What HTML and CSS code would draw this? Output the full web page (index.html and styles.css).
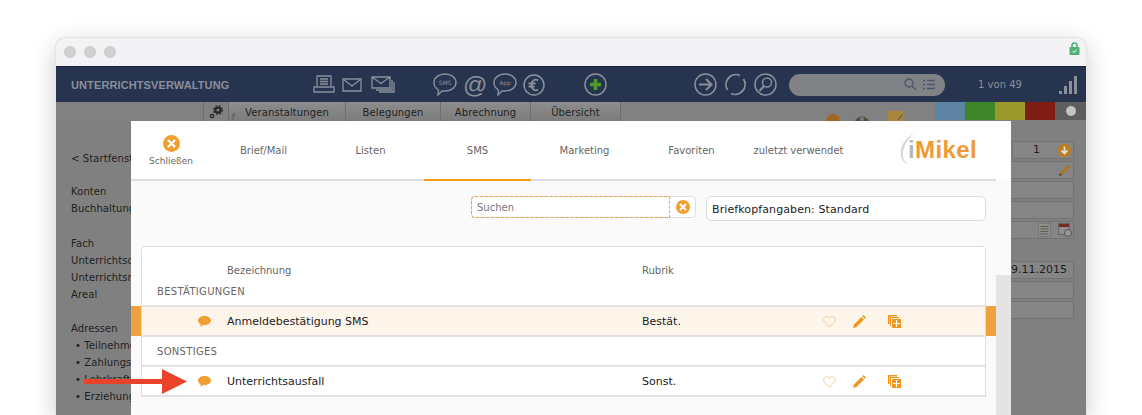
FILE: index.html
```html
<!DOCTYPE html>
<html lang="de">
<head>
    <meta charset="UTF-8">
    <title>iMikel Unterrichtsverwaltung</title>
    <link rel="stylesheet" href="styles.css">
</head>
<body>
<div class="window">
    <div class="titlebar">
        <div class="lights"><span></span><span></span><span></span></div>
        <svg class="lock" width="11" height="13" viewBox="0 0 11 13"><path d="M3 6V3.500a2.500 2.500 0 0 1 5 0V6" fill="none" stroke="#4fb274" stroke-width="1.600"/><rect x="0.500" y="5" width="10" height="8" rx="1" fill="#4fb274"/><path d="M3.500 9l1.500 1.500L7.500 7.500" fill="none" stroke="#fff" stroke-width="1"/></svg>
    </div>

    <div class="navbar">
        <div class="app-title">UNTERRICHTSVERWALTUNG</div>
        <div class="nav-group mail-group">
            <svg class="printer" width="22" height="20" viewBox="0 0 22 20" fill="none" stroke="#8a8f9a" stroke-width="1.300"><path d="M4 11V1h14v10M1 12h20v5H1zM7 4h8M7 6.500h8M7 9h8"/></svg>
            <svg width="20" height="14" viewBox="0 0 20 14" fill="none" stroke="#8a8f9a" stroke-width="1.300"><path d="M1 1h18v12H1zM1 1l9 7 9-7"/></svg>
            <svg width="24" height="17" viewBox="0 0 24 17" fill="none" stroke="#8a8f9a" stroke-width="1.300"><path d="M1 1h18v11H1zM1 1l9 6.500L19 1M21 4v10H5M23 6v10H8"/></svg>
        </div>
        <div class="nav-group send-group">
            <svg width="24" height="23" viewBox="0 0 24 23"><path d="M12 1c6 0 11 3.600 11 8.500S18 18 12 18c-1.500 0-2 0-3 0l-4 4 .5-5C3 15.500 1 13 1 9.500 1 4.600 6 1 12 1z" fill="none" stroke="#8a8f9a" stroke-width="1.400"/><text x="12" y="12" class="bubble-text">SMS</text></svg>
            <span class="at-sign">@</span>
            <svg width="24" height="23" viewBox="0 0 24 23"><path d="M12 1c6 0 11 3.600 11 8.500S18 18 12 18c-1.500 0-2 0-3 0l-4 4 .5-5C3 15.500 1 13 1 9.500 1 4.600 6 1 12 1z" fill="none" stroke="#8a8f9a" stroke-width="1.400"/><text x="12" y="12" class="bubble-text">App</text></svg>
            <svg width="22" height="22" viewBox="0 0 22 22" fill="none" stroke="#8a8f9a"><circle cx="11" cy="11" r="10" stroke-width="1.500"/><path d="M15 6.500c-3-2-6.500 0-6.500 4.500s3.500 6.500 6.500 4.500M5.500 9.500h7M5.500 12.500h6" stroke-width="1.800"/></svg>
        </div>
        <svg class="add-icon" width="23" height="23" viewBox="0 0 23 23"><circle cx="11.500" cy="11.500" r="10.500" fill="none" stroke="#8a8f9a" stroke-width="1.500"/><path d="M11.500 6v11M6 11.500h11" stroke="#4d9a2a" stroke-width="3.600"/></svg>
        <div class="nav-group browse-group">
            <svg width="23" height="23" viewBox="0 0 23 23" fill="none" stroke="#8a8f9a" stroke-width="1.500"><circle cx="11.500" cy="11.500" r="10.500"/><path d="M5 11.500h12M12 6l5.500 5.500L12 17" stroke-width="2"/></svg>
            <svg width="23" height="23" viewBox="0 0 23 23" fill="none" stroke="#8a8f9a" stroke-width="1.800"><path d="M16 2.500A10 10 0 0 0 3.500 17M7 20.500A10 10 0 0 0 19.500 6"/></svg>
            <svg width="23" height="23" viewBox="0 0 23 23" fill="none" stroke="#8a8f9a" stroke-width="1.500"><circle cx="11.500" cy="11.500" r="10.500"/><circle cx="13" cy="9.500" r="4.500"/><path d="M10 13l-4.500 5" stroke-width="2"/></svg>
        </div>
        <div class="search-pill">
            <svg width="13" height="13" viewBox="0 0 13 13" fill="none" stroke="#4b5568" stroke-width="1.300"><circle cx="5" cy="5" r="4"/><path d="M8 8l4 4"/></svg>
            <svg width="12" height="11" viewBox="0 0 12 11" fill="none" stroke="#4b5568" stroke-width="1.300"><path d="M0 1.500h2M4 1.500h8M0 5.500h2M4 5.500h8M0 9.500h2M4 9.500h8"/></svg>
        </div>
        <div class="counter">1 von 49</div>
        <div class="signal"><span></span><span></span><span></span><span></span></div>
    </div>

    <div class="toolbar">
        <div class="gear-cell">
            <svg width="14" height="14" viewBox="0 0 14 14" fill="none" stroke="#222"><circle cx="9" cy="5" r="2.600" stroke-width="2"/><circle cx="9" cy="5" r="4.300" stroke-width="1.200" stroke-dasharray="2 1.400"/><circle cx="3" cy="11" r="1.700" stroke-width="1.200"/></svg>
        </div>
        <div class="tab first-tab">
            <svg class="tab-back" width="7" height="8" viewBox="0 0 7 8"><path d="M1 8V3h3M2.500 1L.5 3l2 2" fill="none" stroke="#666" stroke-width="1.200"/></svg>
            Veranstaltungen
        </div>
        <div class="tab belegungen-tab">Belegungen</div>
        <div class="tab">Abrechnung</div>
        <div class="tab">Übersicht</div>
        <div class="toolbar-icons">
            <svg width="14" height="8" viewBox="0 0 14 8"><path d="M0 8a7 7 0 0 1 14 0z" fill="#a8661a"/><path d="M7 0v8" stroke="#6e6e5e"/></svg>
            <svg width="14" height="8" viewBox="0 0 14 8"><path d="M0 8c3-6 11-6 14 0z" fill="#55503c"/><circle cx="7" cy="6" r="2" fill="#7c7c7c"/></svg>
            <svg class="note-icon" width="16" height="10" viewBox="0 0 16 10"><rect x="0" y="0" width="15" height="10" fill="#a8873a"/><path d="M10 9l4-5" stroke="#555" stroke-width="1.200"/></svg>
        </div>
        <div class="swatches">
            <span class="swatch blue"></span>
            <span class="swatch green"></span>
            <span class="swatch yellow"></span>
            <span class="swatch red"></span>
            <span class="swatch grey"><i></i></span>
        </div>
    </div>

    <div class="backdrop">
        <div class="side-nav">
            <p class="start-link">&lt; Startfenster</p>
            <p>Konten</p>
            <p>Buchhaltung</p>
            <p class="gap">Fach</p>
            <p>Unterrichtsort</p>
            <p>Unterrichtsmittel</p>
            <p>Areal</p>
            <p class="gap">Adressen</p>
            <p class="bullet">Teilnehmer</p>
            <p class="bullet">Zahlungspflichtige</p>
            <p class="bullet">Lehrkraft</p>
            <p class="bullet">Erziehung</p>
        </div>
        <div class="side-fields">
            <div class="number-row">
                <div class="field"></div>
                <div class="field number-field">1
                    <svg width="13" height="13" viewBox="0 0 13 13"><circle cx="6.500" cy="6.500" r="6.500" fill="#c27c1c"/><path d="M6.500 2.500v7M3.500 6.500l3 3 3-3" fill="none" stroke="#ddd" stroke-width="1.800"/></svg>
                </div>
            </div>
            <div class="field icons-row">
                <svg width="14" height="14" viewBox="0 0 14 14"><path d="M1 13l1.500-4L10 1.500 12.500 4 5 11.500z" fill="#a8762c"/><path d="M1 13l1-3 2 2z" fill="#444"/></svg>
            </div>
            <div class="field"></div>
            <div class="field"></div>
            <div class="field icons-row list-icons">
                <svg width="13" height="14" viewBox="0 0 13 14"><rect x="0.500" y="0.500" width="12" height="13" fill="#8e8e8e" stroke="#777"/><path d="M2.500 3.500h8M2.500 6h8M2.500 8.500h8M2.500 11h8" stroke="#5f5a4a"/></svg>
                <svg width="14" height="14" viewBox="0 0 14 14"><rect x="0.500" y="0.500" width="11" height="11" fill="#8e8e8e" stroke="#666"/><path d="M1 2.500h10" stroke="#7a2a22" stroke-width="3"/><circle cx="10" cy="10" r="3.500" fill="#999" stroke="#555"/></svg>
            </div>
            <div class="field date-field">9.11.2015</div>
            <div class="field"></div>
            <div class="field"></div>
        </div>
    </div>

    <!-- Dialog ueber dem abgedunkelten Fenster -->
    <div class="dialog">
        <div class="dialog-main">
            <div class="dialog-head">
                <div class="close-btn">
                    <svg width="17" height="17" viewBox="0 0 17 17"><circle cx="8.500" cy="8.500" r="8.500" fill="#f0a030"/><path d="M5 5l7 7M12 5l-7 7" stroke="#fff" stroke-width="2.200"/></svg>
                    <span>Schließen</span>
                </div>
                <nav class="dialog-tabs">
                    <div class="dialog-tab">Brief/Mail</div>
                    <div class="dialog-tab">Listen</div>
                    <div class="dialog-tab active">SMS</div>
                    <div class="dialog-tab">Marketing</div>
                    <div class="dialog-tab">Favoriten</div>
                    <div class="dialog-tab">zuletzt verwendet</div>
                </nav>
                <div class="logo">
                    <svg class="logo-swoosh" width="22" height="32" viewBox="0 0 22 32"><path d="M15 1C5 5 0 15 2 24c1 4 4 7 9 7-4-1-7-4-7-9C4 14 8 7 15 1z" fill="#d9d9d9"/></svg>
                    <span class="logo-i">i</span><span class="logo-name">Mikel</span>
                </div>
            </div>

            <div class="filter-row">
                <div class="search-box">
                    <div class="search-input">Suchen</div>
                    <svg width="14" height="14" viewBox="0 0 14 14"><circle cx="7" cy="7" r="7" fill="#f0a030"/><path d="M4 4l6 6M10 4l-6 6" stroke="#fff" stroke-width="1.800"/></svg>
                </div>
                <div class="letterhead">Briefkopfangaben: Standard</div>
            </div>

            <div class="list-card">
                <div class="list-head">
                    <span class="col-name">Bezeichnung</span>
                    <span class="col-rubrik">Rubrik</span>
                </div>
                <div class="group-title first-group">BESTÄTIGUNGEN</div>
                <div class="list-row selected">
                    <svg class="bubble" width="13" height="11" viewBox="0 0 13 11"><path d="M6.500 0C10 0 13 1.800 13 4.500S10 9 6.500 9C6 9 5.500 9 5 9L2.500 11l.2-2.800C1 7.500 0 6 0 4.500 0 1.800 3 0 6.500 0z" fill="#f0a030"/></svg>
                    <span class="col-name">Anmeldebestätigung SMS</span>
                    <span class="col-rubrik">Bestät.</span>
                    <div class="row-actions">
                        <svg width="13" height="12" viewBox="0 0 13 12"><path d="M6.500 11L1.500 6C-.5 3.500 1.500.7 3.700.7c1.300 0 2.300.8 2.800 1.800C7 1.500 8 .7 9.300.7c2.200 0 4.200 2.800 2.200 5.300z" fill="none" stroke="#f5c998" stroke-width="1"/></svg>
                        <svg class="edit-icon" width="13" height="13" viewBox="0 0 13 13"><path d="M0 13l1-3.500L8.500 2 11 4.500 3.500 12zM9.300 1.200L10.500 0 13 2.500l-1.200 1.200z" fill="#f0951e"/></svg>
                        <svg width="13" height="13" viewBox="0 0 13 13"><path d="M0 0h9v1.500H1.500V9H0z" fill="#f0951e"/><path d="M2 2h9v1H3v8H2z" fill="#f0951e"/><rect x="4" y="4" width="9" height="9" fill="#f0951e"/><path d="M8.500 5v7M5 8.500h7" stroke="#fff" stroke-width="1.200"/></svg>
                    </div>
                </div>
                <div class="group-title">SONSTIGES</div>
                <div class="list-row">
                    <svg class="bubble" width="13" height="11" viewBox="0 0 13 11"><path d="M6.500 0C10 0 13 1.800 13 4.500S10 9 6.500 9C6 9 5.500 9 5 9L2.500 11l.2-2.800C1 7.500 0 6 0 4.500 0 1.800 3 0 6.500 0z" fill="#f0a030"/></svg>
                    <span class="col-name">Unterrichtsausfall</span>
                    <span class="col-rubrik">Sonst.</span>
                    <div class="row-actions">
                        <svg width="13" height="12" viewBox="0 0 13 12"><path d="M6.500 11L1.500 6C-.5 3.500 1.500.7 3.700.7c1.300 0 2.300.8 2.800 1.800C7 1.500 8 .7 9.300.7c2.200 0 4.200 2.800 2.200 5.300z" fill="none" stroke="#f5c998" stroke-width="1"/></svg>
                        <svg class="edit-icon" width="13" height="13" viewBox="0 0 13 13"><path d="M0 13l1-3.500L8.500 2 11 4.500 3.500 12zM9.300 1.200L10.500 0 13 2.500l-1.200 1.200z" fill="#f0951e"/></svg>
                        <svg width="13" height="13" viewBox="0 0 13 13"><path d="M0 0h9v1.500H1.500V9H0z" fill="#f0951e"/><path d="M2 2h9v1H3v8H2z" fill="#f0951e"/><rect x="4" y="4" width="9" height="9" fill="#f0951e"/><path d="M8.500 5v7M5 8.500h7" stroke="#fff" stroke-width="1.200"/></svg>
                    </div>
                </div>
            </div>
        </div>
        <div class="dialog-strip"></div>
    </div>
</div>

<svg class="arrow" width="103" height="25" viewBox="0 0 103 25"><path d="M0 10h78V0l25 12.500L78 25V15H0z" fill="#e9432a"/></svg>
</body>
</html>
```

FILE: styles.css
```css
html, body {
    margin: 0;
    padding: 0;
    height: 100%;
    overflow: hidden;
    background-color: #fff;
    font-family: "DejaVu Sans", Verdana, sans-serif;
}

body {
    position: relative;
    padding: 38px 56px 0;
    box-sizing: border-box;
}

p {
    margin: 0;
}

.window {
    position: relative;
    height: 377px;
    display: flex;
    flex-direction: column;
    border-radius: 10px 10px 0 0;
    overflow: hidden;
    box-shadow: 0 0 0 1px #e3e3e3;
}

body::before {
    content: "";
    position: absolute;
    left: 56px;
    right: 56px;
    top: 38px;
    bottom: 0;
    border-radius: 10px 10px 0 0;
    box-shadow: 0 6px 24px rgba(0, 0, 0, 0.22);
}

/* Titelleiste */
.titlebar {
    height: 29px;
    flex-shrink: 0;
    box-sizing: border-box;
    display: flex;
    align-items: center;
    justify-content: space-between;
    padding: 0 6px 0 8px;
    background-color: #f3f3f5;
    border-bottom: 1px solid #16233f;
}

.lights {
    display: flex;
    gap: 8px;
}

.lights span {
    width: 12px;
    height: 12px;
    border-radius: 50%;
    background-color: #d2d2d4;
    border: 1px solid #c8c8ca;
    box-sizing: border-box;
}

.lock {
    margin-top: -7px;
}

/* Navigation */
.navbar {
    height: 35px;
    flex-shrink: 0;
    display: flex;
    align-items: center;
    padding-left: 15px;
    background-color: #27344f;
}

.app-title {
    width: 242px;
    font-family: "Liberation Sans", Arial, sans-serif;
    font-size: 11px;
    font-weight: bold;
    letter-spacing: 0.11px;
    color: #8a8f9a;
}

.nav-group {
    display: flex;
    align-items: center;
}

.mail-group {
    gap: 9px;
    width: 120px;
}

.printer {
    margin-right: -2px;
}

.send-group {
    gap: 6px;
    width: 151px;
}

.bubble-text {
    font-size: 6px;
    fill: #8a8f9a;
    text-anchor: middle;
}

.at-sign {
    font-family: "Liberation Sans", Arial, sans-serif;
    font-size: 24px;
    line-height: 25px;
    color: #8a8f9a;
}

.add-icon {
    margin-right: 87px;
}

.browse-group {
    gap: 7px;
    width: 95px;
}

.search-pill {
    width: 156px;
    height: 22px;
    box-sizing: border-box;
    border-radius: 11px;
    background-color: #808286;
    display: flex;
    align-items: center;
    justify-content: flex-end;
    gap: 6px;
    padding-right: 10px;
}

.counter {
    width: 110px;
    text-align: center;
    font-size: 10px;
    color: #8a8f9a;
}

.signal {
    display: flex;
    align-items: flex-end;
    gap: 2px;
    height: 18px;
    margin-left: 4px;
}

.signal span {
    width: 3px;
    background-color: #8a8f9a;
}

.signal span:nth-child(1) { height: 3px; }
.signal span:nth-child(2) { height: 8px; }
.signal span:nth-child(3) { height: 13px; }
.signal span:nth-child(4) { height: 18px; }

/* Register hinter dem Dialog */
.toolbar {
    height: 19px;
    flex-shrink: 0;
    display: flex;
    background-color: #818181;
    font-size: 10px;
    letter-spacing: 0.1px;
    color: #1f1f1f;
}

.gear-cell {
    width: 26px;
    margin-left: 147px;
    box-sizing: border-box;
    display: flex;
    align-items: center;
    justify-content: center;
    border-left: 1px solid #6f6f6f;
    border-right: 1px solid #6f6f6f;
}

.tab {
    width: 90px;
    box-sizing: border-box;
    line-height: 21px;
    text-align: center;
    white-space: nowrap;
    background: linear-gradient(#8d8d8d, #7c7c7c);
    border-right: 1px solid #6f6f6f;
}

.first-tab {
    width: 117px;
    position: relative;
}

.tab-back {
    position: absolute;
    left: 3px;
    top: 10px;
}

.belegungen-tab {
    width: 95px;
}

.toolbar-icons {
    display: flex;
    align-items: flex-end;
    gap: 15px;
    margin-left: 205px;
    width: 90px;
}

.note-icon {
    margin-left: 4px;
}

.swatches {
    position: absolute;
    top: 64px;
    right: 0;
    display: flex;
}

.swatch {
    display: block;
    width: 30px;
    height: 18px;
}

.blue { background-color: #5d85a3; }
.green { background-color: #3e8529; }
.yellow { background-color: #9a9a2c; }
.red { background-color: #7e1d14; }

.grey {
    width: 31px;
    background-color: #5e5e5e;
    display: flex;
    align-items: center;
    justify-content: center;
}

.grey i {
    width: 10px;
    height: 10px;
    border-radius: 50%;
    background-color: #c4c4c4;
}

/* abgedunkelter Inhalt */
.backdrop {
    flex: 1;
    display: flex;
    justify-content: space-between;
    background-color: #808080;
    font-size: 10px;
    letter-spacing: 0.1px;
    color: #1f1f1f;
}

.side-nav {
    padding: 29px 0 0 15px;
    width: 60px;
    white-space: nowrap;
}

.side-nav p {
    line-height: 17px;
}

.side-nav .start-link {
    margin-bottom: 16px;
}

.side-nav .gap {
    margin-top: 17.500px;
}

.side-nav .bullet {
    padding-left: 4px;
}

.side-nav .bullet::before {
    content: "• ";
}

.side-fields {
    width: 75px;
    margin-right: 12px;
    padding-top: 20px;
    display: flex;
    flex-direction: column;
    gap: 2px;
}

.field {
    height: 18px;
    flex: none;
    box-sizing: border-box;
    border: 1px solid #737373;
    background-color: #858585;
    line-height: 16px;
    white-space: nowrap;
}

.number-row {
    display: flex;
    gap: 2px;
}

.number-row .field:first-child {
    width: 11px;
}

.number-field {
    flex: 1;
    display: flex;
    align-items: center;
    justify-content: space-between;
    padding: 0 2px 0 20px;
    font-size: 11px;
}

.icons-row {
    display: flex;
    align-items: center;
    justify-content: flex-end;
    padding-right: 1px;
}

.list-icons {
    gap: 7px;
    margin-bottom: 20px;
}

.date-field {
    text-align: right;
    padding-right: 6px;
    font-size: 11px;
    letter-spacing: 0;
}

/* Dialog */
.dialog {
    position: absolute;
    top: 83px;
    left: 75px;
    width: 880px;
    bottom: 0;
    display: flex;
    color: #222;
}

.dialog-main {
    width: 865px;
    background-color: #fafafa;
}

.dialog-strip {
    width: 15px;
    margin-top: 154px;
    background-color: #e4e4e4;
}

.dialog::after {
    content: "";
    position: absolute;
    right: 0;
    top: 0;
    width: 15px;
    height: 154px;
    background: linear-gradient(#fff 59px, #fafafa 59px);
}

.dialog-head {
    height: 60px;
    box-sizing: border-box;
    display: flex;
    background-color: #fff;
    border-bottom: 2px solid #dedede;
}

.close-btn {
    width: 79px;
    display: flex;
    flex-direction: column;
    align-items: center;
    padding: 14px 0 0 1px;
    box-sizing: border-box;
    font-size: 9px;
    color: #666;
    gap: 4px;
}

.dialog-tabs {
    display: flex;
}

.dialog-tab {
    width: 107px;
    height: 60px;
    box-sizing: border-box;
    padding-top: 24px;
    text-align: center;
    font-size: 10px;
    color: #666;
}

.dialog-tab.active {
    border-bottom: 2px solid #f39a1d;
}

.logo {
    position: relative;
    margin-left: 56px;
    padding-top: 14px;
    font-family: "Liberation Sans", Arial, sans-serif;
    font-size: 24px;
    font-weight: bold;
    letter-spacing: 0.4px;
    line-height: 29px;
    white-space: nowrap;
}

.logo-swoosh {
    position: absolute;
    left: -9px;
    top: 12px;
}

.logo-i {
    position: relative;
    color: #b8b8b8;
}

.logo-name {
    position: relative;
    color: #ee9a35;
}

.filter-row {
    display: flex;
    justify-content: flex-end;
    align-items: flex-start;
    gap: 10px;
    padding: 15px 10px 0 0;
}

.search-box {
    width: 225px;
    height: 22px;
    box-sizing: border-box;
    display: flex;
    align-items: center;
    gap: 6px;
    border: 1px solid #dedede;
    border-radius: 4px;
    background-color: #fff;
}

.search-input {
    width: 199px;
    height: 22px;
    margin: -1px 0 -1px -1px;
    box-sizing: border-box;
    padding-left: 5px;
    line-height: 22px;
    font-size: 10px;
    color: #777;
    border: 1px dashed #f3a145;
    border-radius: 4px 0 0 4px;
}

.letterhead {
    width: 280px;
    height: 25px;
    box-sizing: border-box;
    padding-left: 5px;
    line-height: 25px;
    font-size: 11px;
    letter-spacing: 0.1px;
    color: #222;
    background-color: #fff;
    border: 1px solid #dcdcdc;
    border-radius: 5px;
}

.list-card {
    height: 151px;
    box-sizing: border-box;
    margin: 25px 10px 0;
    background-color: #fff;
    border: 1px solid #dedede;
    border-bottom: 0;
    border-radius: 5px 5px 0 0;
}

.list-head {
    position: relative;
    height: 34px;
    padding-top: 18px;
    box-sizing: border-box;
    font-size: 10px;
    color: #666;
}

.col-name {
    position: absolute;
    left: 85px;
}

.col-rubrik {
    position: absolute;
    left: 500px;
}

.group-title {
    height: 28px;
    box-sizing: border-box;
    padding: 1px 0 0 15px;
    font-size: 10px;
    letter-spacing: 0.3px;
    line-height: 28px;
    color: #666;
}

.first-group {
    height: 24px;
    padding-top: 4px;
    line-height: 14px;
}

.list-row {
    position: relative;
    height: 32px;
    box-sizing: border-box;
    display: flex;
    align-items: center;
    font-size: 11px;
    color: #222;
    border-top: 2px solid #e2e2e2;
    border-bottom: 2px solid #e2e2e2;
}

.list-row.selected {
    background-color: #fdf5ea;
}

.list-row.selected::before,
.list-row.selected::after {
    content: "";
    position: absolute;
    top: -1px;
    bottom: -1px;
    width: 10px;
    background-color: #f0a03c;
}

.list-row.selected::before {
    left: -11px;
}

.list-row.selected::after {
    right: -11px;
}

.bubble {
    margin-left: 56px;
}

.row-actions {
    position: absolute;
    left: 681px;
    top: 8px;
    display: flex;
    gap: 22px;
    align-items: center;
}

.edit-icon {
    margin-left: -5px;
}

.arrow {
    position: absolute;
    left: 84px;
    top: 369px;
}
```
